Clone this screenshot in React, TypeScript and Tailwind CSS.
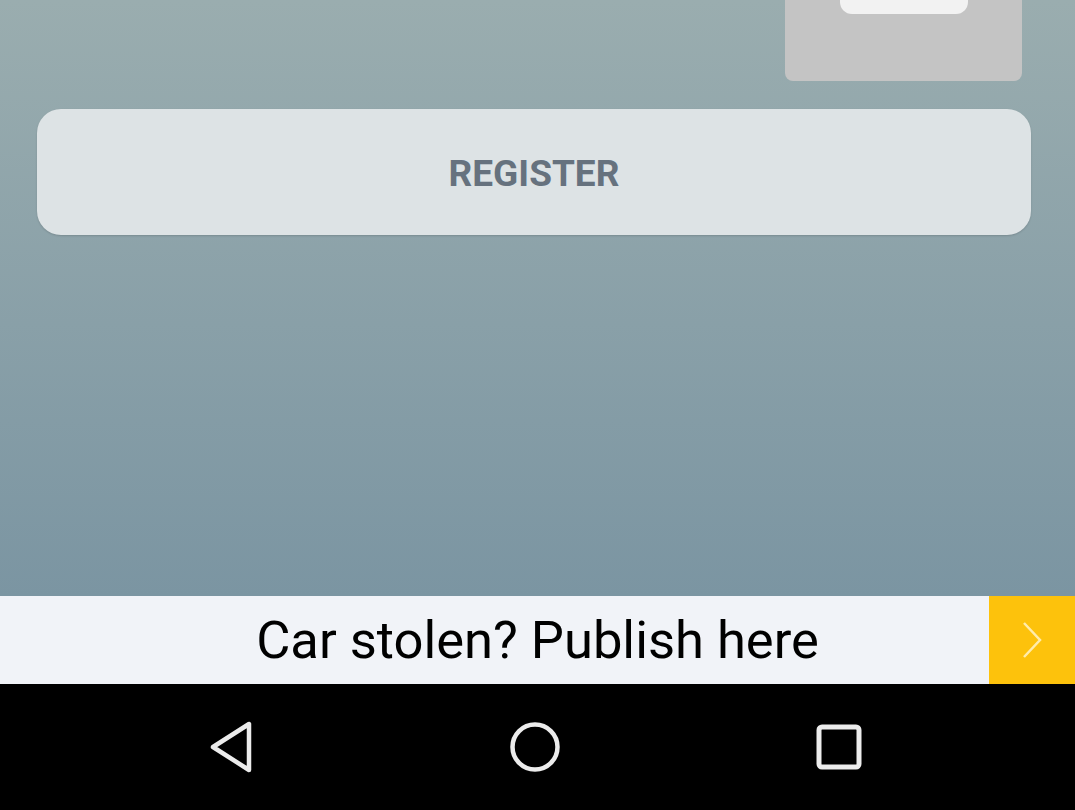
import React from "react";

const NavBar = () => (
  <div className="h-[126px] bg-black flex items-center justify-center gap-[184px] pr-[5px]">
    {/* back */}
    <div className="w-[120px] flex justify-center">
      <svg width="50" height="54" viewBox="0 0 50 54">
        <path
          d="M43 4 L43 50 L7 27 Z"
          fill="none"
          stroke="#ececec"
          strokeWidth="4.5"
          strokeLinejoin="round"
        />
      </svg>
    </div>
    {/* home */}
    <div className="w-[120px] flex justify-center">
      <svg width="54" height="54" viewBox="0 0 54 54">
        <circle cx="27" cy="27" r="22.5" fill="none" stroke="#ececec" strokeWidth="4.5" />
      </svg>
    </div>
    {/* recents */}
    <div className="w-[120px] flex justify-center">
      <svg width="46" height="46" viewBox="0 0 46 46">
        <rect x="3" y="3" width="40" height="40" rx="3" fill="none" stroke="#ececec" strokeWidth="5" />
      </svg>
    </div>
  </div>
);

export default function App() {
  return (
    <div
      className="w-[1075px] h-[810px] flex flex-col overflow-hidden"
      style={{ fontFamily: "Roboto, 'Liberation Sans', sans-serif" }}
    >
      <div className="flex-1 flex flex-col bg-gradient-to-b from-[#9aadaf] to-[#7b95a2]">
        {/* top card, cut off */}
        <div className="flex justify-end pr-[53px]">
          <div className="w-[237px] h-[81px] bg-[#c4c4c4] rounded-b-[8px] flex justify-center">
            <div className="w-[128px] h-[14px] bg-[#f2f2f2] rounded-b-[12px]" />
          </div>
        </div>

        <button className="mt-[28px] mx-[37px] w-[994px] h-[126px] rounded-[24px] bg-[#dde3e5] shadow-[0_1px_2px_rgba(0,0,0,0.15)] flex items-center justify-center pt-[3px]">
          <span className="text-[37px] font-bold text-[#66727e]">REGISTER</span>
        </button>
      </div>

      {/* banner */}
      <div className="relative h-[88px] bg-[#f1f3f8] flex items-center justify-center">
        <span className="text-[52.5px] text-black leading-none">Car stolen? Publish here</span>
        <div className="absolute right-0 top-0 h-full w-[86px] bg-[#fdc20c] flex items-center justify-center">
          <svg width="24" height="38" viewBox="0 0 24 38">
            <path d="M4 2 L20 19 L4 36" fill="none" stroke="#fff3c8" strokeOpacity="0.85" strokeWidth="2.5" />
          </svg>
        </div>
      </div>

      <NavBar />
    </div>
  );
}
